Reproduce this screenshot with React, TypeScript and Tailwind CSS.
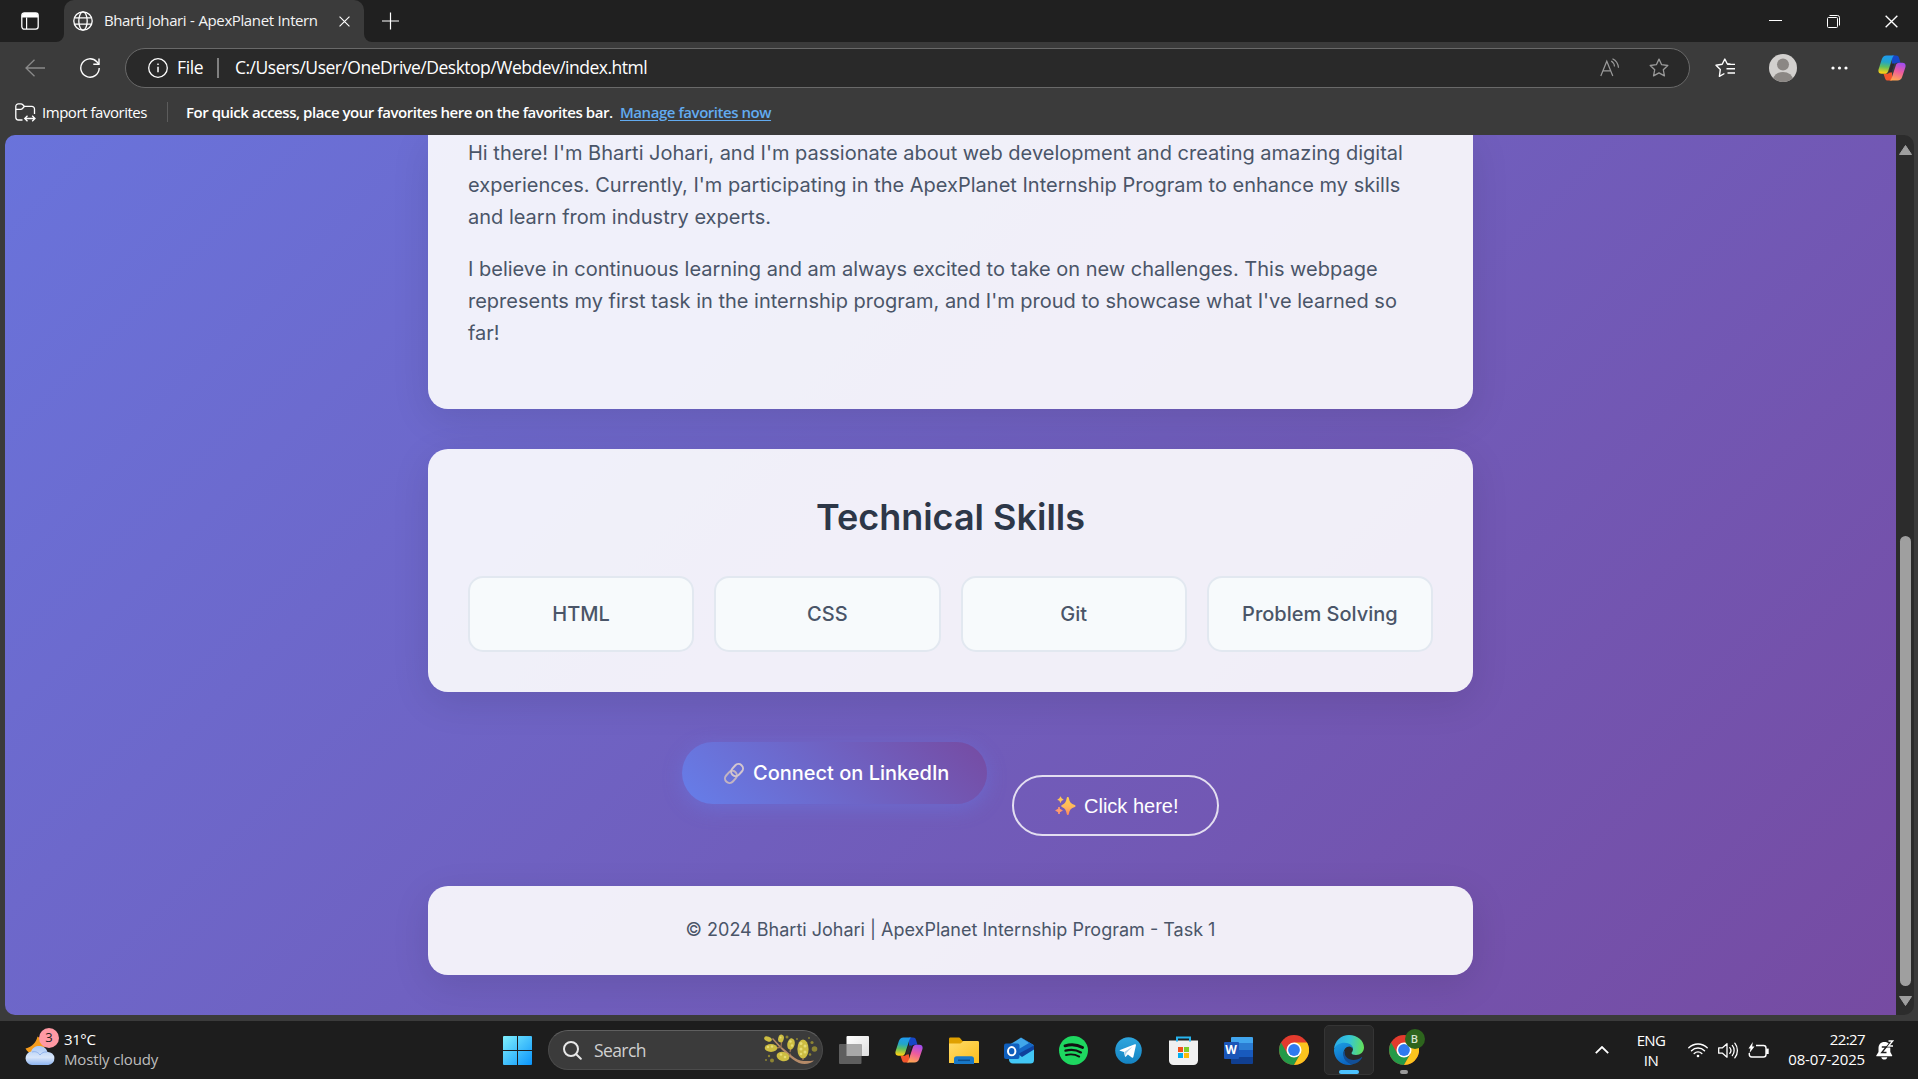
import type { ReactNode } from "react";

const skills = ["HTML", "CSS", "Git", "Problem Solving"];

/* ---------- icons ---------- */

function TabActionsIcon() {
  return (
    <svg width="18" height="18" viewBox="0 0 18 18" fill="none">
      <rect x="0.8" y="0.8" width="16.4" height="16.4" rx="2.6" stroke="#fff" strokeWidth="1.3" />
      <path d="M1 5.5V3.4A2.4 2.4 0 0 1 3.4 1h11.2A2.4 2.4 0 0 1 17 3.4v2.1z" fill="#fff" />
      <path d="M5.6 5.5V17" stroke="#fff" strokeWidth="1.2" />
    </svg>
  );
}

function GlobeIcon() {
  return (
    <svg width="20" height="20" viewBox="0 0 20 20" fill="none" stroke="#fff" strokeWidth="1.3">
      <circle cx="10" cy="10" r="9.2" />
      <ellipse cx="10" cy="10" rx="4.2" ry="9.2" />
      <path d="M1.6 6.8h16.8M1.6 13.2h16.8" />
    </svg>
  );
}

function CrossIcon({ size }: { size: number }) {
  return (
    <svg width={size} height={size} viewBox="0 0 12 12" stroke="#fff" strokeWidth="1.25" fill="none">
      <path d="M.6.6l10.8 10.8M11.4.6L.6 11.4" />
    </svg>
  );
}

function StarIcon({ stroke }: { stroke: string }) {
  return (
    <svg width="20" height="20" viewBox="0 0 20 20" fill="none" stroke={stroke} strokeWidth="1.3" strokeLinejoin="round">
      <path d="M10 1.1l2.65 5.6 6.15.8-4.5 4.25 1.15 6.1L10 14.9l-5.45 2.95 1.15-6.1L1.2 7.5l6.15-.8z" />
    </svg>
  );
}

function CopilotIcon({ id }: { id: string }) {
  return (
    <svg width="28" height="26" viewBox="0 0 28 26">
      <defs>
        <linearGradient id={id + "a"} x1="0.4" y1="0" x2="0.3" y2="1">
          <stop offset="0" stopColor="#1f9bf0" />
          <stop offset=".35" stopColor="#22a5c8" />
          <stop offset=".62" stopColor="#5fbf5e" />
          <stop offset=".95" stopColor="#f7cf17" />
        </linearGradient>
        <linearGradient id={id + "b"} x1="0.7" y1="0" x2="0.4" y2="1">
          <stop offset="0" stopColor="#a04cf0" />
          <stop offset=".5" stopColor="#ee5c9c" />
          <stop offset="1" stopColor="#ffa553" />
        </linearGradient>
      </defs>
      <path d="M14 .5h4.2c1.5 0 2.3.9 2.8 2.3l1.5 5h-3.3c-1.8 0-2.8.9-3.4 2.8L14 16z" fill="#1647c8" />
      <path d="M14 25.5H9.8c-1.5 0-2.3-.9-2.8-2.3l-1.5-4.5h3.3c1.8 0 2.8-.9 3.4-2.8L14 9z" fill="#f2552c" />
      <path d="M8.6.5h8.2c-1.5.3-2.1 1.4-2.6 3l-4 12.4c-.6 1.9-1.6 2.8-3.4 2.8H3.6c-2.6 0-3.7-1.8-3-4.4l3.2-10C4.600 1.800 6 .5 8.600.5z" fill={"url(#" + id + "a)"} />
      <path d="M19.400 25.500h-8.200c1.500-.3 2.100-1.400 2.600-3l4-12c.6-1.800 1.600-2.700 3.400-2.700h3.200c2.600 0 3.700 1.800 3 4.400l-3.200 9.500c-.8 2.500-2.200 3.800-4.800 3.800z" fill={"url(#" + id + "b)"} />
      <path d="M13.300 8.500h3.200L13.800 17.500h-3.200z" fill="#2c2a2e" />
    </svg>
  );
}

function LinkEmoji() {
  return (
    <svg width="20" height="21" viewBox="0 0 20 21" fill="none" strokeWidth="2">
      <g transform="rotate(-48 10 10.5)">
        <rect x="-1.200" y="6" width="13.200" height="9" rx="4.500" stroke="#c3b4c2" />
        <rect x="8" y="6" width="13.200" height="9" rx="4.500" stroke="#d3c6cf" />
      </g>
    </svg>
  );
}

function SparklesEmoji() {
  return (
    <svg width="21" height="20" viewBox="0 0 21 20">
      <defs>
        <linearGradient id="spark" x1="0" y1="0" x2="0" y2="1">
          <stop offset="0" stopColor="#ffd04f" />
          <stop offset=".55" stopColor="#ffb85a" />
          <stop offset="1" stopColor="#ff8560" />
        </linearGradient>
      </defs>
      <path d="M12.800 1c.7 0 .9.500 1.100 1.300.8 3.700 1.700 5.200 5.300 6.500.8.300 1.300.6 1.300 1.200s-.5.900-1.300 1.200c-3.600 1.300-4.500 2.800-5.300 6.500-.2.800-.4 1.300-1.100 1.300s-.9-.5-1.100-1.300c-.8-3.700-1.700-5.200-4.300-6.500-.8-.300-1.200-.6-1.200-1.200s.4-.9 1.200-1.200c2.600-1.300 3.500-2.800 4.300-6.500.2-.8.400-1.300 1.100-1.300z" fill="url(#spark)" />
      <path d="M5.500.8c.5 1.700.9 2.200 2.700 2.800-1.800.6-2.200 1.100-2.700 2.800-.5-1.700-.9-2.200-2.700-2.800 1.800-.6 2.200-1.100 2.700-2.800z" fill="#ffc65a" stroke="#ffc65a" />
      <path d="M4 11c.6 2.200 1.100 2.700 3.300 3.500-2.200.8-2.700 1.300-3.300 3.500-.6-2.200-1.100-2.700-3.300-3.500C2.900 13.700 3.400 13.200 4 11z" fill="#ff9a6e" stroke="#ff9a6e" />
    </svg>
  );
}

function ChromeIcon() {
  return (
    <svg width="30" height="30" viewBox="0 0 30 30">
      <circle cx="15" cy="15" r="15" fill="#e33b2e" />
      <path d="M2.010 7.500L8.500 18.750 15 22.500 15 30A15 15 0 0 1 2.010 7.500z" fill="#249a48" />
      <path d="M8.500 18.750A7.500 7.500 0 0 0 15 22.500l6.400-3.600L15 30z" fill="#249a48" />
      <path d="M21.500 18.750L15 30a15 15 0 0 0 13-22.500H15z" fill="#fcc31e" />
      <circle cx="15" cy="15" r="7.500" fill="#fff" />
      <circle cx="15" cy="15" r="5.900" fill="#2f7af0" />
    </svg>
  );
}

function EdgeIcon() {
  return (
    <svg width="30" height="30" viewBox="0 0 30 30">
      <defs>
        <linearGradient id="eg1" x1="0" y1=".3" x2="1" y2=".4">
          <stop offset="0" stopColor="#2aa9e8" />
          <stop offset=".5" stopColor="#35c5d8" />
          <stop offset="1" stopColor="#62e05a" />
        </linearGradient>
        <linearGradient id="eg2" x1=".2" y1="0" x2=".6" y2="1">
          <stop offset="0" stopColor="#1a9be0" />
          <stop offset="1" stopColor="#0b63c0" />
        </linearGradient>
      </defs>
      <path d="M0 14C.6 6 7 0 15 0c8.500 0 15 5.800 15 12.500 0 4.500-3.600 7.500-8 7.500-3 0-4.500-1-4.500-2 0-.8 1.500-1.500 1.500-4 0-2.700-3.500-5.500-8-5.500C5.500 8.500 2 11 0 14z" fill="url(#eg1)" />
      <path d="M0 14.500C1.500 9.800 5.800 7.700 10.500 7.700c4.800 0 8.500 2.900 8.500 6.300-.8-1.800-2.200-2.600-3.700-2.600-3.300 0-5.800 3.200-5.800 7.100 0 5.600 4.500 9.800 9.500 10.600C17.500 30 16 30 15 30 6.500 30-.4 23 0 14.500z" fill="url(#eg2)" />
      <path d="M11 15.500c-1.600 5.500 3 9.500 8.500 9.500 3.300 0 5.700-1 8-2.800.5-.300.9.1.6.6C26 26.600 22.500 29 18.800 29.200 12.500 28.500 8.600 23.500 9.500 18c.3-1.500.8-2 1.500-2.500z" fill="#124f97" />
    </svg>
  );
}

function ExplorerIcon() {
  return (
    <svg width="30" height="27" viewBox="0 0 30 27">
      <defs>
        <linearGradient id="fold" x1="0" y1="0" x2="1" y2="1">
          <stop offset="0" stopColor="#ffdc6a" />
          <stop offset="1" stopColor="#fbbd1c" />
        </linearGradient>
      </defs>
      <path d="M0 2C0 .8.8.5 1.600.5h7.800c1 0 1.500.3 2 1L13.500 4H25v6H0z" fill="#dfa000" />
      <path d="M0 6.500h10.500c1 0 1.500-.3 2.200-1L14.500 4H28.500c1 0 1.500.5 1.500 1.500V26H0z" fill="url(#fold)" />
      <path d="M5 27v-5c0-1.700 1-2.700 2.700-2.700h14.600c1.700 0 2.700 1 2.700 2.700v5z" fill="#1878c8" />
      <path d="M9 23.300h12" stroke="#0b4d8c" strokeWidth="1.500" />
    </svg>
  );
}

function OutlookIcon() {
  return (
    <svg width="30" height="27" viewBox="0 0 30 27">
      <path d="M5 8L17 .5 29.500 8v7L12 22 5 15z" fill="#41a7ea" />
      <path d="M17 .5L29.500 8v3L18 18l-8-3 15-9z" fill="#1467c6" />
      <path d="M5 22l25-11.500V23a3.500 3.500 0 0 1-3.500 3.500H9A4 4 0 0 1 5 22z" fill="#42c7f5" />
      <path d="M14 17l16-8.500v4L18 20z" fill="#10429c" />
      <rect y="6.500" width="15.500" height="15.500" rx="2" fill="#0f5fbd" />
      <ellipse cx="7.700" cy="14.200" rx="3.700" ry="4.100" fill="none" stroke="#fff" strokeWidth="2" />
    </svg>
  );
}

function SpotifyIcon() {
  return (
    <svg width="29" height="29" viewBox="0 0 29 29" fill="none" strokeLinecap="round">
      <circle cx="14.500" cy="14.500" r="14.500" fill="#1ed760" />
      <path d="M6 9.800c6-1.700 12.500-1.100 17.600 1.700" stroke="#111" strokeWidth="2.800" />
      <path d="M6.500 14.600c5.300-1.400 11-.8 15.400 1.800" stroke="#111" strokeWidth="2.300" />
      <path d="M7 19c4.700-1.100 9.200-.7 13.200 1.600" stroke="#111" strokeWidth="1.900" />
    </svg>
  );
}

function TelegramIcon() {
  return (
    <svg width="27" height="27" viewBox="0 0 27 27">
      <defs>
        <linearGradient id="tg" x1="0" y1="0" x2="0" y2="1">
          <stop offset="0" stopColor="#2ea6de" />
          <stop offset="1" stopColor="#1583c2" />
        </linearGradient>
      </defs>
      <circle cx="13.500" cy="13.500" r="13.300" fill="url(#tg)" />
      <path d="M5 13.100L19.800 7.300c.8-.300 1.300.2 1.100 1.100l-2.500 11.400c-.2.900-.8 1.100-1.600.7l-3.900-2.900-1.900 1.900c-.5.500-1 .3-1.100-.3l-.9-4.200-4-1.200c-.6-.2-.6-.5 0-.7z" fill="#fff" />
      <path d="M9.300 15l8-5.300-6 6.300-.3 3z" fill="#a9cfe8" />
    </svg>
  );
}

function StoreIcon() {
  return (
    <svg width="29" height="29" viewBox="0 0 29 29">
      <path d="M0 4.500h29V24.500a4.500 4.500 0 0 1-4.500 4.500h-20A4.500 4.500 0 0 1 0 24.500z" fill="#f0f0f0" />
      <path d="M8 5.500V1.500h13v4" fill="none" stroke="#27b4ee" strokeWidth="2" />
      <path d="M9 11h5v5H9z" fill="#f1511b" />
      <path d="M15 11h5v5h-5z" fill="#80cc28" />
      <path d="M9 17h5v5H9z" fill="#00adef" />
      <path d="M15 17h5v5h-5z" fill="#fbbc09" />
    </svg>
  );
}

function WordIcon() {
  return (
    <div className="relative h-[27px] w-[30px]">
      <div className="ml-[7px] grid h-[27px] w-[22px] grid-rows-4 overflow-hidden rounded-[1px]">
        <div className="bg-[#41a5ee]" />
        <div className="bg-[#2b7cd3]" />
        <div className="bg-[#185abd]" />
        <div className="bg-[#103f91]" />
      </div>
      <div className="absolute top-[5px] left-0 flex h-[17px] w-[15px] items-center justify-center rounded-[1px] bg-[#1a55b8] font-['Open_Sans'] text-[12px] font-bold text-white">
        W
      </div>
    </div>
  );
}

function TaskViewIcon() {
  return (
    <svg width="30" height="28" viewBox="0 0 30 28">
      <defs>
        <linearGradient id="tv" x1="0" y1="0" x2="1" y2="1">
          <stop offset="0" stopColor="#fff" />
          <stop offset="1" stopColor="#dedede" />
        </linearGradient>
      </defs>
      <rect x="7.500" width="22.500" height="20" rx="1" fill="url(#tv)" />
      <rect y="8" width="22.500" height="20" rx="1" fill="#5e5e5e" />
      <rect x="7.500" y="8" width="15" height="12" fill="#a8a8a8" />
    </svg>
  );
}

function BranchArt() {
  return (
    <svg width="54" height="32" viewBox="0 0 54 32">
      <path d="M9 4c5 6 14 14 22 20 5 3.500 12 3.500 19 2.500-3 3.500-10 4.500-15 2.500C26 25 17 15 8 5z" fill="#b58a68" />
      <path d="M18 13l-6 1M27 20l-7 3M26 18l2-8M39 26v-6M17 12l1-6" stroke="#9b7350" strokeWidth="1.300" />
      <g fill="#cdbd42">
        <ellipse cx="4" cy="5" rx="4" ry="2.400" transform="rotate(20 4 5)" />
        <ellipse cx="17" cy="4.500" rx="2.800" ry="4" transform="rotate(15 17 4.500)" />
        <ellipse cx="7" cy="14" rx="6.300" ry="3.900" />
        <ellipse cx="27" cy="10" rx="3.700" ry="5.700" transform="rotate(12 27 10)" />
        <ellipse cx="19" cy="22.500" rx="6.500" ry="4.600" transform="rotate(15 19 22.500)" />
        <ellipse cx="39" cy="15" rx="5.600" ry="9.500" />
      </g>
      <g fill="#e6dc74">
        <circle cx="37" cy="9.500" r="1.500" /><circle cx="41" cy="12" r="1.500" /><circle cx="37" cy="15" r="1.500" />
        <circle cx="41" cy="18" r="1.500" /><circle cx="37" cy="20" r="1.300" /><circle cx="4" cy="13" r="1.200" />
        <circle cx="8" cy="12.500" r="1.200" /><circle cx="17" cy="20.500" r="1.300" /><circle cx="21" cy="23" r="1.300" />
        <circle cx="26.500" cy="7.500" r="1.200" /><circle cx="28" cy="11.500" r="1.200" /><circle cx="16.500" cy="3.500" r="1" />
      </g>
      <g fill="#8d8433">
        <circle cx="50.500" cy="15" r="2.800" /><circle cx="48" cy="8.500" r="1.600" /><circle cx="8" cy="26.500" r="2" />
        <circle cx="5" cy="22" r="1.200" /><circle cx="23" cy="3" r="1.500" /><circle cx="45" cy="4" r="1" />
        <circle cx="46" cy="20.500" r="1.300" /><circle cx="2" cy="26" r="1" /><circle cx="33" cy="5" r="1" />
      </g>
    </svg>
  );
}

/* ---------- browser chrome ---------- */

function TabStrip() {
  return (
    <div className="flex h-[42px] bg-[#202020]">
      <div className="flex w-16 items-center pl-[21px]">
        <TabActionsIcon />
      </div>
      <div className="relative flex w-[300px] items-center rounded-t-[10px] bg-[#3b3b3b] pl-[9px]">
        <svg className="absolute bottom-0 -left-2" width="8" height="8"><path d="M8 0v8H0a8 8 0 0 0 8-8z" fill="#3b3b3b" /></svg>
        <svg className="absolute -right-2 bottom-0" width="8" height="8"><path d="M0 0v8h8a8 8 0 0 1-8-8z" fill="#3b3b3b" /></svg>
        <GlobeIcon />
        <span className="ml-[11px] w-[235px] pb-px text-[15px] tracking-[-0.39px] text-[#f4f4f4] [word-spacing:0.4px]">Bharti Johari - ApexPlanet Intern</span>
        <CrossIcon size={11} />
      </div>
      <div className="flex items-center pl-[18px]">
        <svg width="17" height="18" viewBox="0 0 17 18" stroke="#fff" strokeWidth="1.200"><path d="M0 9h17M8.500.5v17" /></svg>
      </div>
      <div className="mr-5 ml-auto flex items-center gap-[45px]">
        <svg width="13" height="13" stroke="#fff" strokeWidth="1"><path d="M0 5.500h13" /></svg>
        <svg width="13" height="13" viewBox="0 0 13 13" fill="none" stroke="#fff">
          <rect x=".5" y="2.500" width="10" height="10" rx="1" />
          <path d="M2.500.5h8a2 2 0 0 1 2 2v8" />
        </svg>
        <CrossIcon size={13} />
      </div>
    </div>
  );
}

function Toolbar() {
  return (
    <div className="flex h-[52px] items-center">
      <svg className="ml-[25px]" width="20" height="18" viewBox="0 0 20 18" fill="none" stroke="#8a8a8a" strokeWidth="1.300">
        <path d="M20 9H1M9.500.8L1 9l8.500 8.200" />
      </svg>
      <svg className="ml-[35px]" width="20" height="20" viewBox="0 0 20 20" fill="none" stroke="#fff" strokeWidth="1.400">
        <path d="M19.200 10A9.200 9.200 0 1 1 16.800 3.800L18.800 6" />
        <path d="M19 .5v5.700h-5.700" />
      </svg>
      <div className="ml-[25px] flex h-10 w-[1565px] items-center rounded-full border border-[#696969] bg-[#292929] pl-[22px]">
        <svg width="20" height="20" viewBox="0 0 20 20" fill="none" stroke="#fff" strokeWidth="1.300">
          <circle cx="10" cy="10" r="9.300" />
          <path d="M10 8.800v5.500" strokeWidth="1.500" />
          <circle cx="10" cy="6.200" r=".5" fill="#fff" strokeWidth=".8" />
        </svg>
        <span className="ml-[9px] w-10 pb-px text-[17.5px] tracking-[-0.4px] text-white">File</span>
        <div className="h-5 w-0.5 bg-[#808080]" />
        <span className="ml-4 pb-px text-[17.5px] tracking-[-0.5px] text-white">C:/Users/User/OneDrive/Desktop/Webdev/index.html</span>
        <svg className="ml-auto" width="20" height="20" viewBox="0 0 20 20" fill="none" stroke="#9a9a9a" strokeWidth="1.200">
          <path d="M.8 18L6.800 3.200 12.800 18M3 12.800h7.600" />
          <path d="M11.200 3c2 1.200 3.100 3 3.300 5.500M12.500.8c3.600 1.700 5.600 4.800 6 9" />
        </svg>
        <div className="mr-5 ml-[29px]"><StarIcon stroke="#9a9a9a" /></div>
      </div>
      <svg className="ml-[25px]" width="20" height="20" viewBox="0 0 20 20" fill="none" stroke="#fff" strokeWidth="1.400" strokeLinejoin="round">
        <path d="M15.500 6.200l-3.300-.5L9.800 1 7.200 6.200 1 7.200l4.300 4.300-.9 6.800 5-2.800" />
        <path d="M12.200 6.400H20M11.500 10.700H20M12.500 15H20" />
      </svg>
      <svg className="ml-[34px]" width="28" height="28" viewBox="0 0 28 28">
        <clipPath id="av"><circle cx="14" cy="14" r="14" /></clipPath>
        <g clipPath="url(#av)">
          <path d="M0 0h28v28H0z" fill="#d2d0ce" />
          <circle cx="14" cy="10.500" r="6" fill="#8b8784" />
          <ellipse cx="14" cy="26" rx="10" ry="8" fill="#8b8784" />
        </g>
      </svg>
      <svg className="ml-[34px]" width="17" height="4" fill="#fff"><circle cx="2" cy="2" r="1.600" /><circle cx="8.500" cy="2" r="1.600" /><circle cx="15" cy="2" r="1.600" /></svg>
      <div className="ml-[30px]"><CopilotIcon id="cpt" /></div>
    </div>
  );
}

function FavoritesBar() {
  return (
    <div className="flex h-[41px] items-center pb-[5px] text-[15px] text-white">
      <svg className="ml-[15px]" width="21" height="19" viewBox="0 0 21 19" fill="none" stroke="#fff" strokeWidth="1.300">
        <path d="M7.500 17H3.500A2.700 2.700 0 0 1 .8 14.300V3.400A2.500 2.500 0 0 1 3.300.9H6c.8 0 1.300.3 1.800.8l1.500 1.600h7.500a2.700 2.700 0 0 1 2.700 2.700v5" />
        <path d="M1 6.300h4.700c.8 0 1.300-.2 1.800-.8l1.800-2" />
        <path d="M10 15.500h9.500M12.500 12.700l-2.800 2.800 2.800 2.800M17.200 12.700l2.800 2.800-2.800 2.800" />
      </svg>
      <span className="ml-[6px] w-[125px] tracking-[-0.46px]">Import favorites</span>
      <div className="h-5 w-px bg-[#5c5c5c]" />
      <span className="ml-[18px] w-[434px] font-semibold tracking-[-0.46px]">For quick access, place your favorites here on the favorites bar.</span>
      <span className="font-semibold tracking-[-0.46px] text-[#62abf0] underline underline-offset-2">Manage favorites now</span>
    </div>
  );
}

/* ---------- web page ---------- */

function WebPage() {
  return (
    <div className="flex w-[1891px] flex-col items-center bg-[linear-gradient(135deg,#667eea_0%,#764ba2_100%)] bg-[length:100%_1617px] bg-bottom font-['Inter',sans-serif] text-[20px] leading-8 text-[#4a5568]">
      <section className="h-[274px] w-[1045px] rounded-b-[20px] bg-white/90 px-10 pt-[2px] shadow-[0_10px_38px_rgba(0,0,0,0.1)]">
        <p>
          Hi there! I'm Bharti Johari, and I'm passionate about web development and creating amazing digital
          experiences. Currently, I'm participating in the ApexPlanet Internship Program to enhance my skills and
          learn from industry experts.
        </p>
        <p className="mt-5">
          I believe in continuous learning and am always excited to take on new challenges. This webpage represents
          my first task in the internship program, and I'm proud to showcase what I've learned so far!
        </p>
      </section>

      <section className="mt-10 h-[243px] w-[1045px] rounded-[20px] bg-white/90 px-10 pt-10 shadow-[0_10px_38px_rgba(0,0,0,0.1)]">
        <h2 className="h-[87px] text-center text-[36px] leading-[57px] font-semibold text-[#2d3748]">Technical Skills</h2>
        <div className="grid grid-cols-4 gap-5">
          {skills.map((s) => (
            <div key={s} className="flex h-[76px] items-center justify-center rounded-[15px] border-2 border-[#e2e8f0] bg-[#f7fafc] font-medium">
              {s}
            </div>
          ))}
        </div>
      </section>

      <div className="mt-[50px] flex h-[144px] items-start gap-[25px]">
        <div className="flex h-[62px] w-[305px] items-center rounded-full bg-[linear-gradient(45deg,#667eea,#764ba2)] pl-[42px] font-medium text-white shadow-[0_5px_19px_rgba(102,126,234,0.4)]">
          <LinkEmoji />
          <span className="ml-[9px] whitespace-nowrap">Connect on LinkedIn</span>
        </div>
        <div className="mt-[33px] flex h-[61px] w-[207px] items-center rounded-full border-2 border-white/80 pl-[41px] font-['Liberation_Sans',sans-serif] text-white">
          <SparklesEmoji />
          <span className="ml-[8px] pt-px whitespace-nowrap">Click here!</span>
        </div>
      </div>

      <footer className="mb-10 flex h-[89px] w-[1045px] items-center justify-center rounded-[20px] bg-white/90 pb-[2px] text-[18px] shadow-[0_10px_38px_rgba(0,0,0,0.1)]">
        © 2024 Bharti Johari | ApexPlanet Internship Program - Task 1
      </footer>
    </div>
  );
}

function ScrollBar() {
  return (
    <div className="flex w-[18px] flex-col items-center bg-[#2c2c2c]">
      <svg className="mt-[10px]" width="13" height="10"><path d="M6.500.5L12.500 9.500H.5z" fill="#9f9f9f" stroke="#9f9f9f" strokeLinejoin="round" /></svg>
      <div className="mt-[381px] h-[450px] w-[11px] rounded-full bg-[#9f9f9f]" />
      <svg className="mt-[10px]" width="13" height="10"><path d="M6.500 9.500L12.500.5H.5z" fill="#9f9f9f" stroke="#9f9f9f" strokeLinejoin="round" /></svg>
    </div>
  );
}

/* ---------- taskbar ---------- */

function Slot({ children }: { children: ReactNode }) {
  return <div className="flex h-[50px] w-[55px] items-center justify-center">{children}</div>;
}

function Taskbar() {
  return (
    <div className="flex h-[58px] items-center bg-[#1d1d1d] text-[15px]">
      <div className="flex w-[503px] pl-[25px]">
        <div className="relative h-[36px] w-[30px]">
          <svg width="30" height="36" viewBox="0 1 30 36">
            <defs>
              <linearGradient id="cl" x1="0" y1="0" x2="0" y2="1">
                <stop offset="0" stopColor="#a9c8f5" />
                <stop offset=".6" stopColor="#d8e6fa" />
                <stop offset="1" stopColor="#8db4f0" />
              </linearGradient>
            </defs>
            <path d="M12.500 6.500c-1.500 6-5 10-12 12 2 4.500 7 6.500 12 5 6-2 9-8 7-12.500z" fill="#f59c1c" />
            <path d="M7 35a6.800 6.800 0 0 1-.8-13.500C7 18 10.500 16 14 16c4.500 0 7.500 2.500 8.500 6a6.500 6.500 0 0 1 .8 13z" fill="url(#cl)" />
            <path d="M7 22c3-1 6 0 8 3 1.500-2 4-3.500 7-3" fill="none" stroke="#8fb2ee" />
          </svg>
          <div className="absolute -top-[3px] left-[14px] flex size-5 items-center justify-center rounded-full bg-[#ff99a4] text-[13px] text-[#222]">3</div>
        </div>
        <div className="-mt-[2px] ml-[9px] flex flex-col leading-5">
          <span className="tracking-[-0.4px] text-white">31°C</span>
          <span className="tracking-[-0.15px] text-[#bdbdbd]">Mostly cloudy</span>
        </div>
      </div>
      <svg width="29" height="29" viewBox="0 0 29 29">
        <defs>
          <linearGradient id="win" x1="0" y1="0" x2="1" y2="1">
            <stop offset="0" stopColor="#7ff0fd" />
            <stop offset="1" stopColor="#0a94fb" />
          </linearGradient>
        </defs>
        <path d="M0 1a1 1 0 0 1 1-1h13v14H0zM15 0h13a1 1 0 0 1 1 1v13H15zM0 15h14v14H1a1 1 0 0 1-1-1zM15 15h14v13a1 1 0 0 1-1 1H15z" fill="url(#win)" />
      </svg>
      <div className="ml-4 flex h-10 w-[275px] items-center rounded-full border border-[#4b4b4b] border-t-[#5f5f5f] bg-[#3b3b3b] pl-[14px]">
        <svg width="19" height="19" viewBox="0 0 19 19" fill="none" stroke="#e8e8e8" strokeWidth="2" strokeLinecap="round">
          <circle cx="8" cy="8" r="7" /><path d="M13.200 13.200l4.600 4.600" />
        </svg>
        <span className="ml-[12px] pt-px text-[17.5px] tracking-[-0.6px] text-[#d0d0d0]">Search</span>
        <div className="mr-[4px] ml-auto"><BranchArt /></div>
      </div>
      <div className="ml-[3px] flex">
        <Slot><TaskViewIcon /></Slot>
        <Slot><CopilotIcon id="cpb" /></Slot>
        <Slot><ExplorerIcon /></Slot>
        <Slot><OutlookIcon /></Slot>
        <Slot><SpotifyIcon /></Slot>
        <Slot><TelegramIcon /></Slot>
        <Slot><StoreIcon /></Slot>
        <Slot><WordIcon /></Slot>
        <Slot><ChromeIcon /></Slot>
        <Slot>
          <div className="relative flex size-[50px] items-center justify-center rounded-[5px] border border-[#353535] bg-[#292929]">
            <EdgeIcon />
            <div className="absolute bottom-0 left-[14px] h-1 w-5 rounded-full bg-[#4cc2ff]" />
          </div>
        </Slot>
        <Slot>
          <div className="relative flex size-[50px] items-center justify-center">
            <ChromeIcon />
            <div className="absolute top-[4px] right-[4px] flex size-5 items-center justify-center rounded-full bg-[#2d651d] text-[11px] font-semibold text-[#d5e3cf]">B</div>
            <div className="absolute bottom-[1px] left-[21px] h-1 w-2 rounded-full bg-[#9a9a9a]" />
          </div>
        </Slot>
      </div>
      <div className="mr-[24px] ml-auto flex items-center text-white">
        <svg width="14" height="8" viewBox="0 0 14 8" fill="none" stroke="#fff" strokeWidth="1.800"><path d="M.8 7.200L7 1l6.200 6.200" /></svg>
        <div className="ml-[24px] flex w-[36px] flex-col items-center pb-px leading-5 tracking-[-0.6px]">
          <span>ENG</span>
          <span>IN</span>
        </div>
        <svg className="ml-[19px]" width="20" height="16" viewBox="0 0 20 16" fill="none" stroke="#fff" strokeWidth="1.400" strokeLinecap="round">
          <path d="M.8 5.800a13 13 0 0 1 18.400 0M3.500 8.700a9.200 9.200 0 0 1 13 0M6.200 11.400a5.400 5.400 0 0 1 7.600 0" />
          <circle cx="10" cy="14" r="1.300" fill="#fff" stroke="none" />
        </svg>
        <svg className="ml-[10px]" width="21" height="17" viewBox="0 0 21 17" fill="none" stroke="#fff" strokeWidth="1.300" strokeLinejoin="round" strokeLinecap="round">
          <path d="M.7 5.800h3.800L9 1.800v13.400l-4.500-4H.7z" />
          <path d="M11.800 5.600a4.600 4.600 0 0 1 0 5.800M14.300 3.400a8 8 0 0 1 0 10.200M16.800 1.200a11.500 11.500 0 0 1 0 14.600" />
        </svg>
        <svg className="ml-[9px]" width="21" height="17" viewBox="0 0 21 17" fill="none" stroke="#fff" strokeWidth="1.400">
          <path d="M8 3.500h7.500a2.500 2.500 0 0 1 2.500 2.500v6.500a2.500 2.500 0 0 1-2.500 2.500H3.700A2.500 2.500 0 0 1 1.300 12.500V11" />
          <path d="M18.800 7.300h1.200v4h-1.200z" fill="#fff" stroke="#fff" />
          <path d="M4.800 0L.5 6.500h2L1.500 11l5-6.500H4.200z" fill="#fff" stroke="none" />
        </svg>
        <div className="ml-[12px] flex w-[84px] flex-col items-end pb-[2px] leading-5">
          <span className="tracking-[-0.6px]">22:27</span>
          <span className="tracking-[-0.15px]">08-07-2025</span>
        </div>
        <svg className="ml-[11px]" width="18" height="20" viewBox="0 0 18 20">
          <path d="M8.500 2C4.500 2 2.500 4.700 2.500 8v4L.3 15.500c-.2.400 0 .8.500.8h14.900c.5 0 .7-.4.500-.8L14.300 12V8c0-3.300-1.800-6-5.800-6z" fill="#fff" />
          <path d="M5.300 17.300h6c-.3 1.500-1.500 2.300-3 2.300s-2.700-.8-3-2.300z" fill="#fff" />
          <path d="M5.800 7h4.500l-4.500 5.500h4.700" fill="none" stroke="#1d1d1d" strokeWidth="1.400" />
          <path d="M12.500 1h4.200l-4.200 5h4.500" fill="none" stroke="#1d1d1d" strokeWidth="3" />
          <path d="M12.500 1h4.200l-4.200 5h4.500" fill="none" stroke="#fff" strokeWidth="1.300" />
        </svg>
      </div>
    </div>
  );
}

export default function App() {
  return (
    <div className="flex h-[1079px] w-[1918px] flex-col overflow-hidden bg-[#3b3b3b] font-['Open_Sans',sans-serif] whitespace-nowrap">
      <TabStrip />
      <Toolbar />
      <FavoritesBar />
      <div className="mb-[6px] ml-[5px] flex h-[880px] w-[1909px] overflow-hidden rounded-[10px] whitespace-normal">
        <WebPage />
        <ScrollBar />
      </div>
      <Taskbar />
    </div>
  );
}
